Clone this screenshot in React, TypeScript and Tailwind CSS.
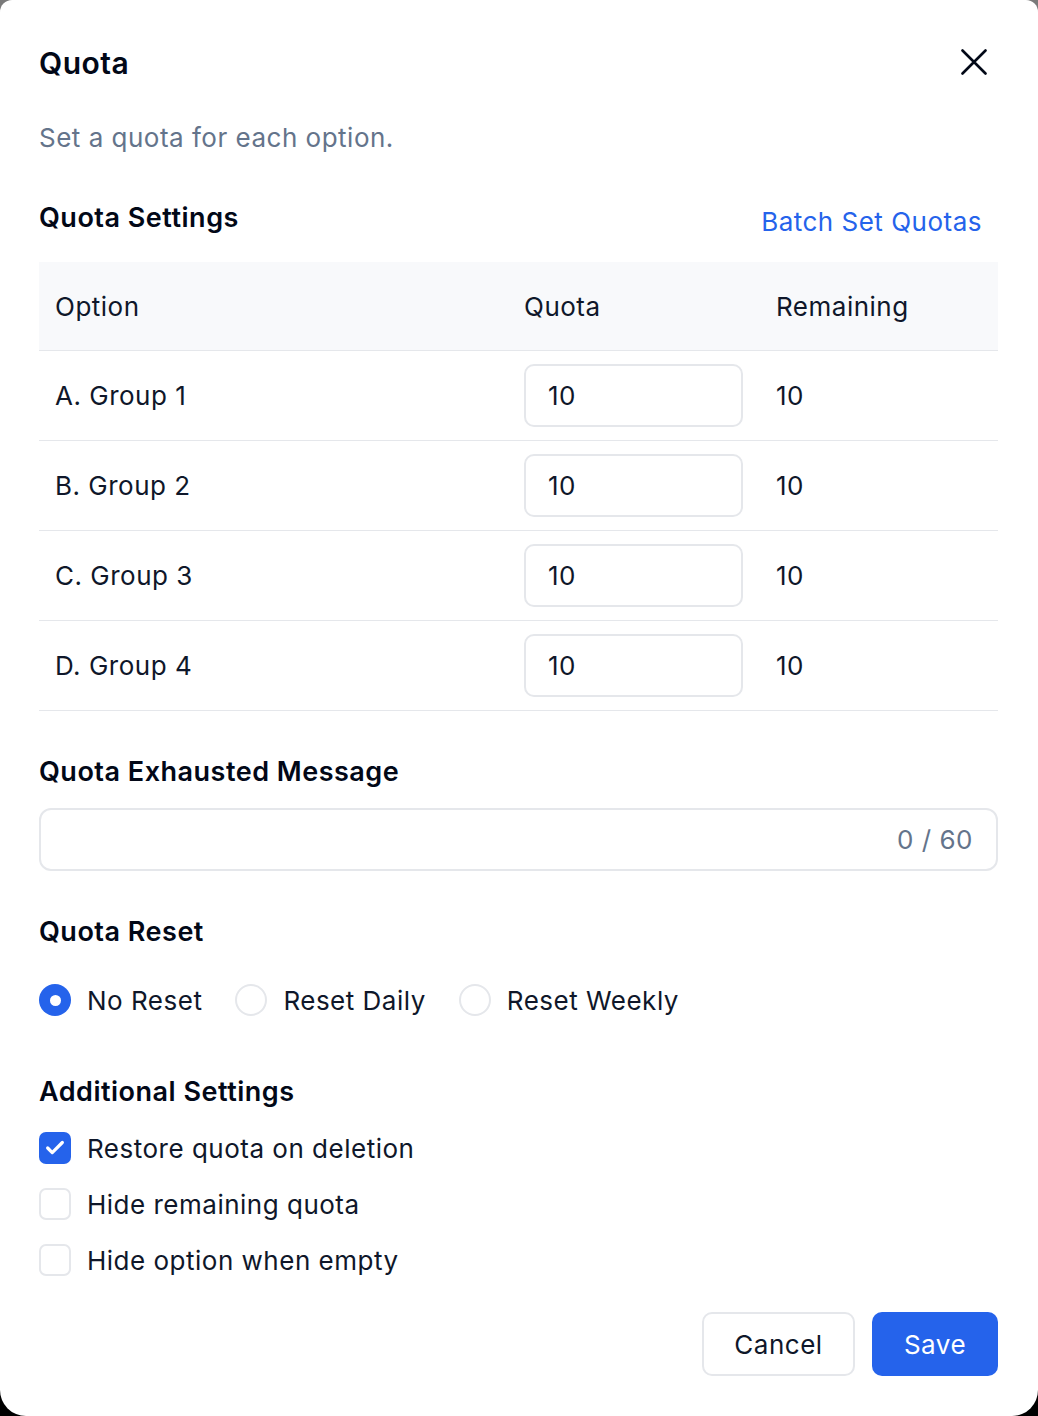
import { Check } from "lucide-react"

type Row = {
  label: string
  quota: number
  remaining: number
}

const rows: Row[] = [
  { label: "A. Group 1", quota: 10, remaining: 10 },
  { label: "B. Group 2", quota: 10, remaining: 10 },
  { label: "C. Group 3", quota: 10, remaining: 10 },
  { label: "D. Group 4", quota: 10, remaining: 10 },
]

const resets = [
  { label: "No Reset", checked: true },
  { label: "Reset Daily", checked: false },
  { label: "Reset Weekly", checked: false },
]

const extras = [
  { label: "Restore quota on deletion", checked: true },
  { label: "Hide remaining quota", checked: false },
  { label: "Hide option when empty", checked: false },
]

function Radio({ checked }: { checked: boolean }) {
  return checked ? (
    <span className="flex h-[32px] w-[32px] shrink-0 items-center justify-center rounded-full bg-[#2563eb]">
      <span className="h-[11px] w-[11px] rounded-full bg-white" />
    </span>
  ) : (
    <span className="h-[32px] w-[32px] shrink-0 rounded-full border-2 border-[#e5e7eb] bg-white" />
  )
}

function Checkbox({ checked }: { checked: boolean }) {
  return checked ? (
    <span className="flex h-[32px] w-[32px] shrink-0 items-center justify-center rounded-[7px] bg-[#2563eb]">
      <Check className="h-[22px] w-[22px] text-white" strokeWidth={3.5} />
    </span>
  ) : (
    <span className="h-[32px] w-[32px] shrink-0 rounded-[7px] border-2 border-[#e5e7eb] bg-white" />
  )
}

export default function App() {
  return (
    <div className="min-h-[1416px] bg-[linear-gradient(to_bottom,#7a7a7a_50%,#000_50%)] font-['Inter','Noto_Sans',sans-serif] tracking-[0.5px] text-[#0f172a]">
      <div className="flex h-[1416px] flex-col rounded-t-[12px] rounded-b-[26px] bg-white pl-[39px] pr-[40px] pt-[45px]">
        {/* header */}
        <div className="flex h-[36px] items-center justify-between">
          <h2 className="text-[30px] font-semibold leading-[36px] text-[#020817]">Quota</h2>
          <button className="mr-[6px] mt-[-2px] flex h-[36px] w-[36px] items-center justify-center text-[#020817]">
            <svg width="26" height="26" viewBox="0 0 26 26" fill="none" stroke="currentColor" strokeWidth="2.6" strokeLinecap="round">
              <path d="M1.5 1.5L24.5 24.5M24.5 1.5L1.5 24.5" />
            </svg>
          </button>
        </div>
        <p className="mt-[39px] text-[26px] leading-[36px] text-[#64748b]">Set a quota for each option.</p>

        {/* quota table */}
        <div className="mt-[44px] flex items-start justify-between">
          <h3 className="text-[27px] font-semibold leading-[36px] text-[#020817]">Quota Settings</h3>
          <button className="mr-[16px] mt-[4px] text-[26px] leading-[36px] tracking-[0.5px] text-[#2563eb]">
            Batch Set Quotas
          </button>
        </div>
        <div className="mt-[22px] text-[26px]">
          <div className="grid h-[89px] grid-cols-[469px_252px_1fr] items-center border-b border-[#e5e7eb] bg-[#f8f9fb]">
            <span className="pl-[16px]">Option</span>
            <span className="pl-[16px]">Quota</span>
            <span className="pl-[16px]">Remaining</span>
          </div>
          {rows.map((r) => (
            <div
              key={r.label}
              className="grid h-[90px] grid-cols-[469px_252px_1fr] items-center border-b border-[#e5e7eb]"
            >
              <span className="pl-[16px]">{r.label}</span>
              <div className="pl-[16px]">
                <input
                  readOnly
                  value={r.quota}
                  className="h-[63px] w-[219px] rounded-[10px] border-2 border-[#e5e7eb] bg-white px-[22px] text-[26px] tracking-[0.5px] text-[#0f172a] outline-none"
                />
              </div>
              <span className="pl-[16px]">{r.remaining}</span>
            </div>
          ))}
        </div>

        {/* exhausted message */}
        <h3 className="mt-[43px] text-[27px] font-semibold leading-[36px] text-[#020817]">Quota Exhausted Message</h3>
        <div className="mt-[18px] flex h-[63px] items-center justify-end rounded-[12px] border-2 border-[#e5e7eb] px-[23px]">
          <span className="text-[26px] text-[#64748b]">0 / 60</span>
        </div>

        {/* reset */}
        <h3 className="mt-[43px] text-[27px] font-semibold leading-[36px] text-[#020817]">Quota Reset</h3>
        <div className="mt-[32px] flex h-[36px] items-center gap-[33px]">
          {resets.map((o) => (
            <label key={o.label} className="flex items-center gap-[16px] text-[26px]">
              <Radio checked={o.checked} />
              {o.label}
            </label>
          ))}
        </div>

        {/* additional */}
        <h3 className="mt-[56px] text-[27px] font-semibold leading-[36px] text-[#020817]">Additional Settings</h3>
        <div className="mt-[20px] flex flex-col gap-[20px]">
          {extras.map((o) => (
            <label key={o.label} className="flex h-[36px] items-center gap-[16px] text-[26px]">
              <Checkbox checked={o.checked} />
              {o.label}
            </label>
          ))}
        </div>

        {/* footer */}
        <div className="mt-[34px] flex justify-end gap-[17px]">
          <button className="h-[64px] w-[153px] rounded-[10px] border-2 border-[#e5e7eb] bg-white text-[26px] tracking-[0.5px] text-[#0f172a]">
            Cancel
          </button>
          <button className="h-[64px] w-[126px] rounded-[10px] bg-[#2563eb] text-[26px] tracking-[0.5px] text-white">
            Save
          </button>
        </div>
      </div>
    </div>
  )
}
